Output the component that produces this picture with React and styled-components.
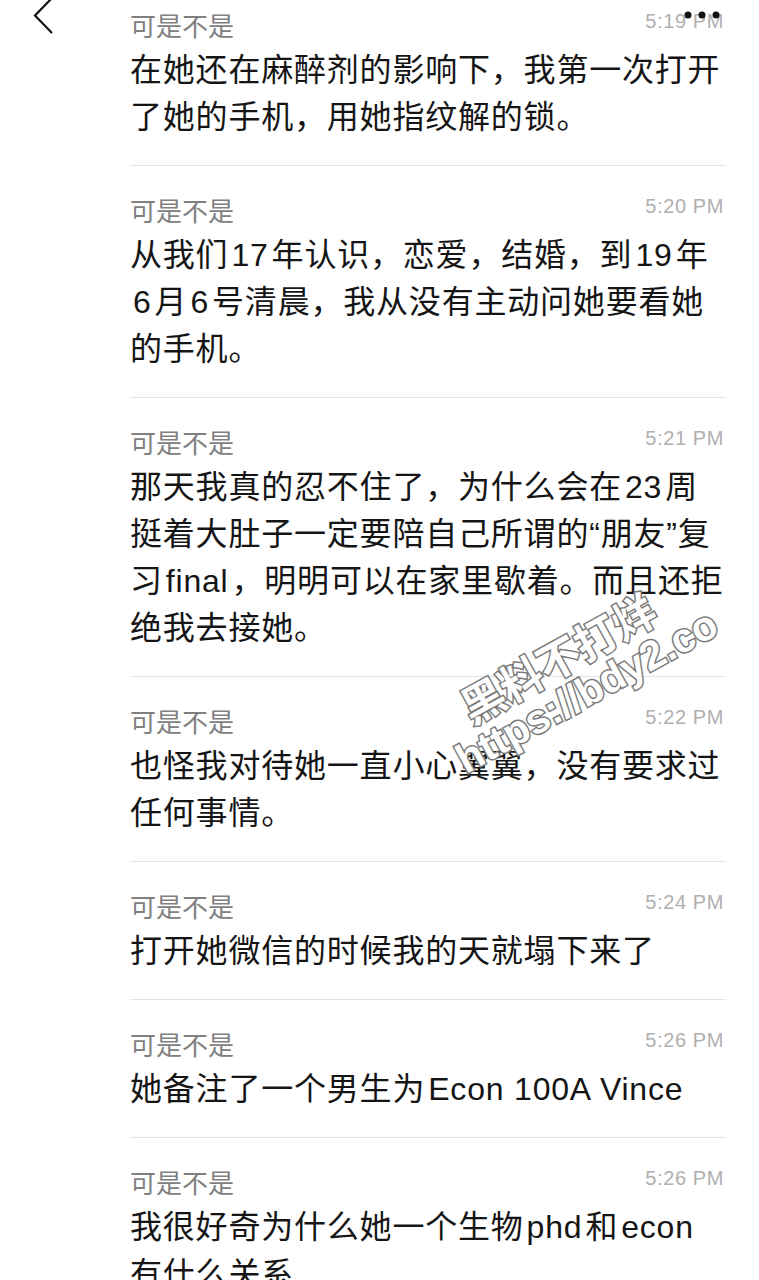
import React from 'react';
import styled, { createGlobalStyle } from 'styled-components';

const GlobalStyle = createGlobalStyle`
  html, body {
    margin: 0;
    padding: 0;
    background: #fff;
  }

  body {
    font-family: "Liberation Sans", "Noto Sans CJK SC", sans-serif;
    overflow: hidden;
  }
`;

const messages = [
  {
    time: '5:19 PM',
    lines: ['在她还在麻醉剂的影响下，我第一次打开', '了她的手机，用她指纹解的锁。'],
  },
  {
    time: '5:20 PM',
    lines: ['从我们17年认识，恋爱，结婚，到19年', '6月6号清晨，我从没有主动问她要看她', '的手机。'],
  },
  {
    time: '5:21 PM',
    lines: [
      '那天我真的忍不住了，为什么会在23周',
      '挺着大肚子一定要陪自己所谓的“朋友”复',
      '习final，明明可以在家里歇着。而且还拒',
      '绝我去接她。',
    ],
  },
  {
    time: '5:22 PM',
    lines: ['也怪我对待她一直小心翼翼，没有要求过', '任何事情。'],
  },
  {
    time: '5:24 PM',
    lines: ['打开她微信的时候我的天就塌下来了'],
  },
  {
    time: '5:26 PM',
    lines: ['她备注了一个男生为Econ 100A Vince'],
  },
  {
    time: '5:26 PM',
    lines: ['我很好奇为什么她一个生物phd和econ', '有什么关系'],
  },
];

// wrap latin runs so they get the little gap iOS puts next to CJK text
const renderLine = (text) =>
  text.split(/([A-Za-z0-9](?:[A-Za-z0-9 ]*[A-Za-z0-9])?)/).map((part, i) =>
    i % 2 === 1 ? <Latin key={i}>{part}</Latin> : part
  );

const App = () => {
  return (
    <Page>
      <GlobalStyle />
      <List>
        {messages.map((msg, i) => (
          <Item key={i} $first={i === 0}>
            <Meta>
              <Sender>可是不是</Sender>
              <Time>{msg.time}</Time>
            </Meta>
            <Body>
              {msg.lines.map((line, j) => (
                <Line key={j}>{renderLine(line)}</Line>
              ))}
            </Body>
          </Item>
        ))}
      </List>

      <NavBar>
        <svg width="24" height="34" viewBox="0 0 24 34" style={{ overflow: 'visible' }}>
          <path d="M22 -2 L5 15.5 L22 33" fill="none" stroke="#111" strokeWidth="2.2" />
        </svg>
        <svg width="40" height="10" viewBox="0 0 40 10">
          <circle cx="6" cy="5" r="3.5" fill="#111" />
          <circle cx="20" cy="5" r="3.5" fill="#111" />
          <circle cx="34" cy="5" r="3.5" fill="#111" />
        </svg>
      </NavBar>

      <Watermark>
        <WatermarkLine $cjk>黑料不打烊</WatermarkLine>
        <WatermarkLine>https://bdy2.co</WatermarkLine>
      </Watermark>
    </Page>
  );
};

const Page = styled.div`
  position: relative;
  width: 759px;
  height: 1280px;
  overflow: hidden;
  background: #fff;
`;

const List = styled.div`
  display: flex;
  flex-direction: column;
  padding: 0 33px 0 130px;
`;

const Item = styled.div`
  padding: ${(props) => (props.$first ? '3px' : '22px')} 0 24px;
  border-bottom: 1px solid #e4e4e4;
`;

const Meta = styled.div`
  display: flex;
  justify-content: space-between;
  align-items: center;
  height: 44px;
`;

const Sender = styled.span`
  font-family: "Noto Sans CJK SC", sans-serif;
  font-size: 26px;
  color: #808080;
  line-height: 44px;
`;

const Time = styled.span`
  font-size: 20px;
  letter-spacing: 0.6px;
  color: #b0b0b0;
  margin-bottom: 8px;
  padding-right: 2px;
`;

const Body = styled.div`
  display: flex;
  flex-direction: column;
`;

const Line = styled.div`
  font-size: 32px;
  letter-spacing: 0.8px;
  line-height: 47px;
  color: #151515;
  white-space: nowrap;
`;

const Latin = styled.span`
  margin: 0 3px;
`;

const NavBar = styled.div`
  position: absolute;
  top: 0;
  left: 0;
  right: 0;
  display: flex;
  justify-content: space-between;
  align-items: flex-start;
  padding: 0 37px 0 30px;

  svg:last-child {
    margin-top: 10px;
  }
`;

const Watermark = styled.div`
  position: absolute;
  left: 576px;
  top: 672px;
  transform: translate(-50%, -50%) rotate(-29deg);
  display: flex;
  flex-direction: column;
  align-items: center;
  pointer-events: none;
`;

const WatermarkLine = styled.div`
  font-family: ${(props) =>
    props.$cjk ? '"Noto Sans CJK SC", sans-serif' : '"Liberation Sans", sans-serif'};
  font-weight: 700;
  font-size: ${(props) => (props.$cjk ? '43px' : '41px')};
  line-height: 45px;
  white-space: nowrap;
  color: #fff;
  -webkit-text-stroke: 3px #7a7a7a;
  paint-order: stroke fill;
  margin-right: ${(props) => (props.$cjk ? '18px' : '0')};
`;

export default App;
